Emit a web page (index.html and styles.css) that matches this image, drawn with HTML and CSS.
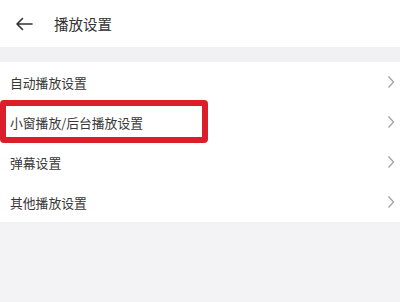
FILE: index.html
```html
<!DOCTYPE html>
<html lang="zh-CN">
<head>
<meta charset="utf-8">
<link rel="stylesheet" href="styles.css">
</head>
<body>
<div class="page">
  <header class="topbar">
    <svg class="back" width="18" height="14" viewBox="0 0 18 14"><path d="M17 7H2M7.5 1.5L2 7l5.5 5.5" fill="none" stroke="#333" stroke-width="1.6" stroke-linecap="round" stroke-linejoin="round"/></svg>
    <span class="title">播放设置</span>
  </header>
  <div class="gap"></div>
  <ul class="list">
    <li class="row"><span>自动播放设置</span><svg class="chev" width="8" height="14" viewBox="0 0 8 14"><path d="M1.5 1.5L6.5 7l-5 5.5" fill="none" stroke="#a3a3a3" stroke-width="1.3"/></svg></li>
    <li class="row"><span>小窗播放/后台播放设置</span><svg class="chev" width="8" height="14" viewBox="0 0 8 14"><path d="M1.5 1.5L6.5 7l-5 5.5" fill="none" stroke="#a3a3a3" stroke-width="1.3"/></svg></li>
    <li class="row"><span>弹幕设置</span><svg class="chev" width="8" height="14" viewBox="0 0 8 14"><path d="M1.5 1.5L6.5 7l-5 5.5" fill="none" stroke="#a3a3a3" stroke-width="1.3"/></svg></li>
    <li class="row"><span>其他播放设置</span><svg class="chev" width="8" height="14" viewBox="0 0 8 14"><path d="M1.5 1.5L6.5 7l-5 5.5" fill="none" stroke="#a3a3a3" stroke-width="1.3"/></svg></li>
  </ul>
  <div class="highlight"></div>
</div>
</body>
</html>
```
FILE: styles.css
```css
html, body {
  margin: 0;
  padding: 0;
}
body {
  background: #f3f3f5;
  font-family: "Noto Sans CJK SC", "Noto Sans", sans-serif;
  color: #333;
}
.page {
  position: relative;
  width: 400px;
  height: 302px;
  overflow: hidden;
}
.topbar {
  height: 47px;
  background: #fff;
  display: flex;
  align-items: center;
  padding-left: 15px;
  box-sizing: border-box;
}
.back {
  display: block;
  margin-top: 1px;
}
.title {
  font-size: 14.5px;
  margin-left: 21px;
  color: #333;
}
.gap {
  height: 15px;
  background: #f1f1f3;
}
.list {
  list-style: none;
  margin: 0;
  padding: 0;
  background: #fff;
}
.row {
  height: 40px;
  display: flex;
  align-items: center;
  justify-content: space-between;
  padding: 0 5px 0 10px;
  font-size: 12.8px;
  color: #383838;
}
.chev {
  display: block;
}
.highlight {
  position: absolute;
  left: 0;
  top: 100px;
  width: 208px;
  height: 43px;
  box-sizing: border-box;
  border: 6px solid #da1f2b;
  border-radius: 4px;
}
```
